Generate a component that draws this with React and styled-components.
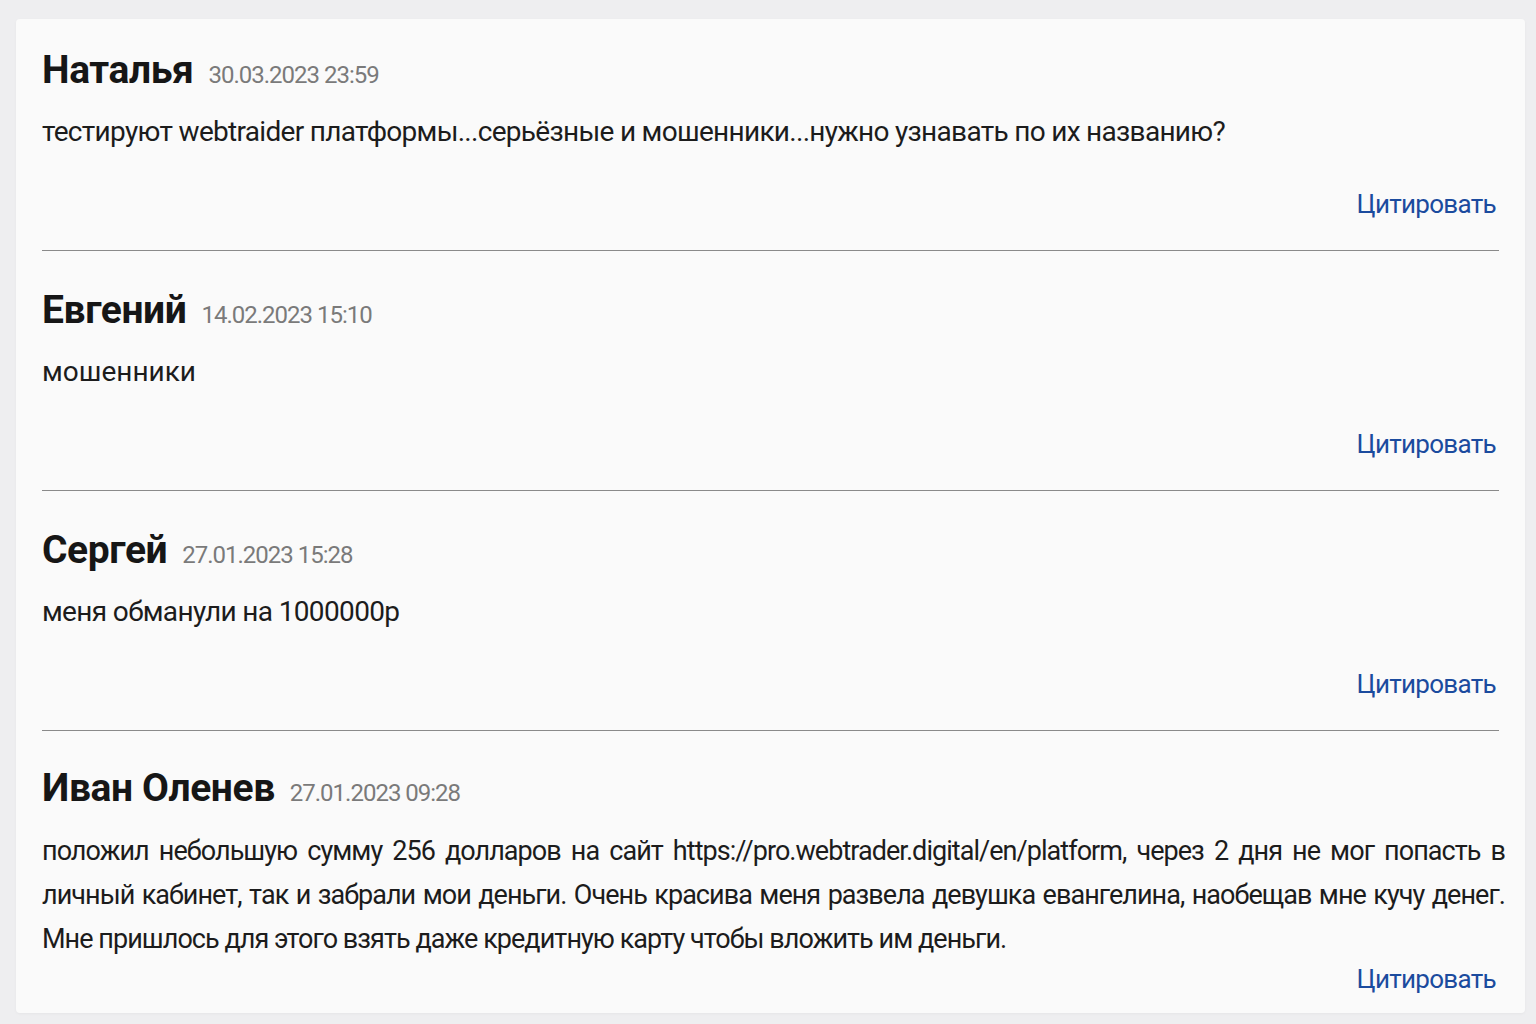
import React from "react";
import styled, { createGlobalStyle } from "styled-components";

const comments = [
  {
    name: "Наталья",
    date: "30.03.2023 23:59",
    size: 28,
    tracking: -0.7,
    lines: [
      "тестируют webtraider платформы...серьёзные и мошенники...нужно узнавать по их названию?",
    ],
  },
  { name: "Евгений", date: "14.02.2023 15:10", size: 28, tracking: 0, lines: ["мошенники"] },
  {
    name: "Сергей",
    date: "27.01.2023 15:28",
    size: 28,
    tracking: -0.65,
    lines: ["меня обманули на 1000000р"],
  },
  {
    name: "Иван Оленев",
    date: "27.01.2023 09:28",
    size: 27,
    tracking: -0.95,
    lines: [
      "положил небольшую сумму 256 долларов на сайт https://pro.webtrader.digital/en/platform, через 2 дня не мог попасть в",
      "личный кабинет, так и забрали мои деньги. Очень красива меня развела девушка евангелина, наобещав мне кучу денег.",
      "Мне пришлось для этого взять даже кредитную карту чтобы вложить им деньги.",
    ],
  },
];

function App() {
  return (
    <>
      <Global />
      <Page>
        <Card>
          {comments.map((c, i) => {
            const multi = c.lines.length > 1;
            return (
              <Comment key={c.name} $first={i === 0} $last={i === comments.length - 1}>
                <Head>
                  <Name>{c.name}</Name>
                  <Stamp>{c.date}</Stamp>
                </Head>
                <Body $multi={multi} $size={c.size} $tracking={c.tracking}>
                  {c.lines.map((l, j) => (
                    <Line key={l} $justify={multi && j < 2}>
                      {l}
                    </Line>
                  ))}
                </Body>
                <Actions $tight={multi}>
                  <Quote href="#">Цитировать</Quote>
                </Actions>
              </Comment>
            );
          })}
        </Card>
      </Page>
    </>
  );
}

const Global = createGlobalStyle`
  html, body {
    margin: 0;
    padding: 0;
    background: #eeeef0;
  }
  body {
    font-family: Roboto, "Noto Sans", Arial, sans-serif;
    color: #1a1a1a;
  }
`;

const Page = styled.div`
  padding: 19px 11px 11px 16px;
  min-height: 1024px;
  box-sizing: border-box;
`;

const Card = styled.div`
  background: #fafafa;
  border-radius: 4px;
  padding: 0 26px;
  box-shadow: 0 1px 3px rgba(0, 0, 0, 0.04);
`;

const Comment = styled.div`
  padding: ${(p) => (p.$first ? "29px" : p.$last ? "35px" : "37px")} 0
    ${(p) => (p.$last ? "12px" : "24px")};
  border-bottom: ${(p) => (p.$last ? "none" : "1px solid #8a8a8a")};
`;

const Head = styled.div`
  display: flex;
  align-items: baseline;
  gap: 15px;
  height: 44px;
  line-height: 44px;
`;

const Name = styled.span`
  font-size: 39px;
  font-weight: 700;
  color: #161616;
  letter-spacing: -0.4px;
`;

const Stamp = styled.span`
  font-size: 24px;
  color: #7a7a7a;
  letter-spacing: -1px;
`;

const Body = styled.div`
  margin-top: ${(p) => (p.$multi ? "19px" : "18px")};
  margin-right: ${(p) => (p.$multi ? "-6px" : "0")};
  overflow: hidden;
  font-size: ${(p) => p.$size}px;
  line-height: 44px;
  color: #1c1c1c;
  letter-spacing: ${(p) => p.$tracking}px;
`;

const Line = styled.div`
  white-space: nowrap;
  text-align: ${(p) => (p.$justify ? "justify" : "left")};
  text-align-last: ${(p) => (p.$justify ? "justify" : "auto")};
`;

const Actions = styled.div`
  margin-top: ${(p) => (p.$tight ? "-4px" : "28px")};
  display: flex;
  justify-content: flex-end;
  line-height: 44px;
  padding-right: 3px;
`;

const Quote = styled.a`
  font-size: 26px;
  color: #1b4b9e;
  text-decoration: none;
  letter-spacing: -0.7px;
`;

export default App;
